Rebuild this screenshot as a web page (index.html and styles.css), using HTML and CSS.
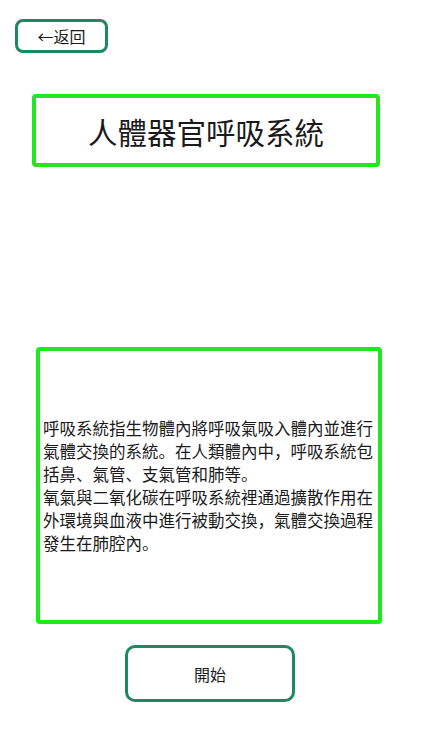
FILE: index.html
```html
<!DOCTYPE html>
<html lang="zh">
  <head>
    <meta charset="UTF-8" />
    <meta name="viewport" content="width=device-width, initial-scale=1.0" />
    <title>人體器官呼吸系統</title>
    <link rel="stylesheet" href="styles.css">
  </head>
  <body>
    <button class="back">←返回</button>

    <h1 class="title">人體器官呼吸系統</h1>

    <section class="info">
      <p>呼吸系統指生物體內將呼吸氣吸入體內並進行氣體交換的系統。在人類體內中，呼吸系統包括鼻、氣管、支氣管和肺等。<br />氧氣與二氧化碳在呼吸系統裡通過擴散作用在外環境與血液中進行被動交換，氣體交換過程發生在肺腔內。</p>
    </section>

    <button class="start">開始</button>
  </body>
</html>
```

FILE: styles.css
```css
body {
  margin: 0;
  background-color: #fff;
  font-family: "Noto Sans CJK SC", "Noto Sans", sans-serif;
  color: #1a1a1a;
  display: flex;
  flex-direction: column;
  align-items: flex-start;
}

button {
  font-family: inherit;
  background-color: #fff;
  color: #1a1a1a;
  border: 3px solid #1b8a5f;
  cursor: pointer;
  padding: 0;
}

.back {
  margin: 19px 0 0 15px;
  width: 93px;
  height: 34px;
  border-radius: 8px;
  font-size: 16px;
}

.title {
  box-sizing: border-box;
  margin: 41px 0 0 32px;
  width: 348px;
  height: 73px;
  border: 4px solid #1fe81f;
  border-radius: 4px;
  display: flex;
  align-items: center;
  justify-content: center;
  font-size: 29.5px;
  font-weight: normal;
}

.info {
  box-sizing: border-box;
  margin: 180px 0 0 36px;
  width: 346px;
  height: 277px;
  border: 4px solid #1fe81f;
  border-radius: 4px;
  padding: 0 2px 0 3px;
  display: flex;
  align-items: center;
}

.info p {
  margin: 0;
  font-size: 16.5px;
  line-height: 23px;
}

.start {
  margin: 21px 0 0 125px;
  width: 170px;
  height: 57px;
  border-radius: 10px;
  font-size: 16px;
}
```
